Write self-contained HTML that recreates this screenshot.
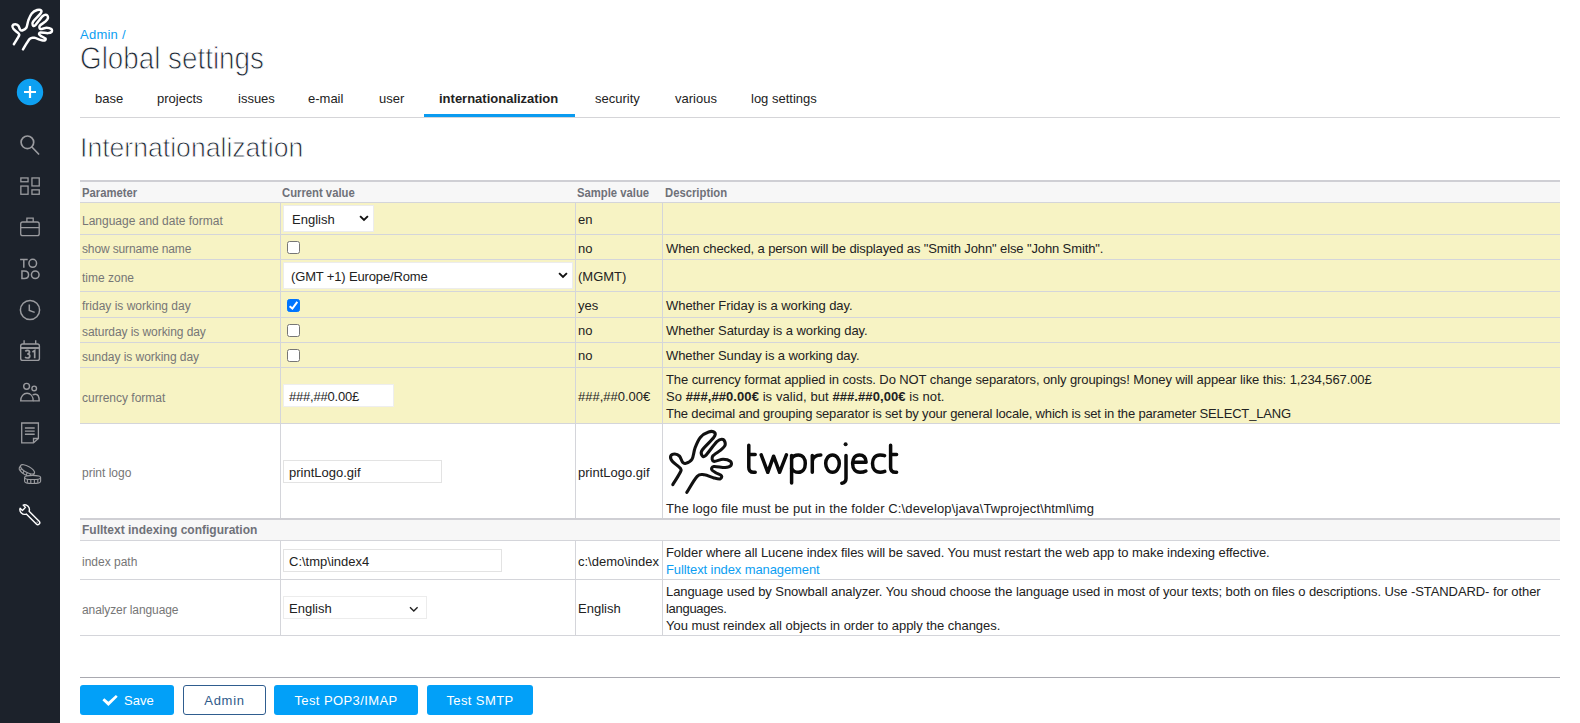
<!DOCTYPE html>
<html><head><meta charset="utf-8">
<style>
*{box-sizing:border-box}
html,body{margin:0;padding:0}
body{width:1580px;height:723px;overflow:hidden;position:relative;background:#fff;font-family:"Liberation Sans",sans-serif;color:#222}
.a{position:absolute;white-space:nowrap;line-height:1}
#side{position:absolute;left:0;top:0;width:60px;height:723px;background:#1c222b}
.ic{position:absolute;left:0;width:60px;overflow:visible}
.tab{position:absolute;top:91px;font-size:13px;color:#222}
.hl{position:absolute;left:80px;width:1480px;height:1px;background:#d4d5da}
.vl{position:absolute;width:1px;background:#d4d5da}
.yel{position:absolute;left:80px;width:1480px;background:#f7f3c4}
.lab{position:absolute;left:82px;font-size:12px;color:#767676;line-height:1;white-space:nowrap}
.th{position:absolute;font-size:12px;font-weight:bold;color:#6f7179;line-height:1;white-space:nowrap;transform-origin:0 0}
.tx{position:absolute;font-size:13px;color:#222;line-height:1;white-space:nowrap}
.sel{position:absolute;background:#fff;border:1px solid #ececec}
.inp{position:absolute;background:#fff;border:1px solid #e3e3e3}
.cb{position:absolute;left:287px;width:13px;height:13px;border:1.3px solid #767676;border-radius:2.5px;background:#fff}
.btn{position:absolute;top:685px;height:30px;border-radius:3px;background:#02a0f8;color:#fff;font-size:13px;line-height:32px;text-align:center;letter-spacing:0.4px}
</style></head><body>

<div id="side">
<svg width="60" height="723" viewBox="0 0 60 723" style="position:absolute;left:0;top:0">
<path transform="translate(8.8,5.5) scale(0.65)" d="M7.80,59.60 C9.00,57.62 13.70,50.37 15.00,47.70 C16.30,45.03 16.88,45.50 15.60,43.60 C14.32,41.70 8.95,38.38 7.30,36.30 C5.65,34.22 5.27,32.32 5.70,31.10 C6.13,29.88 8.43,29.00 9.90,29.00 C11.37,29.00 13.22,29.72 14.50,31.10 C15.78,32.48 16.57,36.08 17.60,37.30 C18.63,38.52 19.13,38.92 20.70,38.40 C22.27,37.88 25.43,36.80 27.00,34.20 C28.57,31.60 28.72,26.43 30.10,22.80 C31.48,19.17 33.05,15.03 35.30,12.40 C37.55,9.77 41.20,7.80 43.60,7.00 C46.00,6.20 48.83,6.70 49.70,7.60 C50.57,8.50 50.87,9.52 48.80,12.40 C46.73,15.28 39.30,21.95 37.30,24.90 C35.30,27.85 36.27,29.15 36.80,30.10 C37.33,31.05 37.98,32.85 40.50,30.60 C43.02,28.35 48.97,19.28 51.90,16.60 C54.83,13.92 56.72,13.98 58.10,14.50 C59.48,15.02 60.55,17.97 60.20,19.70 C59.85,21.43 58.08,23.00 56.00,24.90 C53.92,26.80 48.90,29.20 47.70,31.10 C46.50,33.00 47.07,35.78 48.80,36.30 C50.53,36.82 55.33,34.20 58.10,34.20 C60.87,34.20 64.10,35.25 65.40,36.30 C66.70,37.35 66.77,39.47 65.90,40.50 C65.03,41.53 63.05,42.33 60.20,42.50 C57.35,42.67 51.05,41.15 48.80,41.50 C46.55,41.85 46.37,43.57 46.70,44.60 C47.03,45.63 49.17,46.67 50.80,47.70 C52.43,48.73 55.80,49.77 56.50,50.80 C57.20,51.83 56.28,53.55 55.00,53.90 C53.72,54.25 51.40,53.58 48.80,52.90 C46.20,52.22 42.17,50.07 39.40,49.80 C36.63,49.53 35.13,48.37 32.20,51.30 C29.27,54.23 23.53,64.72 21.80,67.40" fill="none" stroke="#fff" stroke-width="3.85" stroke-linecap="round" stroke-linejoin="round"/>
<circle cx="30" cy="92" r="13.2" fill="#0ea0f1"/>
<path d="M24 92H36M30 86V98" stroke="#fff" stroke-width="2.2" fill="none"/>
<g fill="none" stroke="#9a9b9f" stroke-width="1.7">
<circle cx="27.4" cy="142.3" r="6.3"/>
<path d="M31.9 147 L38.6 154" stroke-linecap="round"/>
</g>
<g fill="none" stroke="#9a9b9f" stroke-width="1.3">
<rect x="20.85" y="177.95" width="7.2" height="3.8"/>
<rect x="20.85" y="186.05" width="7.2" height="8.2"/>
<rect x="31.95" y="177.95" width="7.3" height="8"/>
<rect x="31.95" y="189.85" width="7.3" height="4.4"/>
<rect x="20.7" y="222" width="18.5" height="13.7" rx="2"/>
<path d="M26.9 222V218.2H33.2V222M20.7 227.6H39.2"/>
<circle cx="30" cy="310" r="9.6" stroke-width="1.5"/>
<path d="M29.3 304.5V310.4L34.7 312.4" stroke-width="1.5"/>
<rect x="20.7" y="344" width="18.7" height="16.4" rx="2" stroke-width="1.4"/>
<path d="M20.7 348H39.4" stroke-width="1.9"/><path d="M24.1 340.2V344M35.7 340.2V344" stroke-width="1.4"/>
<circle cx="26.6" cy="386.3" r="2.9" stroke-width="1.4"/>
<circle cx="34.2" cy="388.4" r="2.3" stroke-width="1.4"/>
<path d="M20.7 400.9C20.7 396.2 23.5 393.3 27 393.3C30.5 393.3 33.2 396.2 33.2 400.9Z" stroke-width="1.4"/>
<path d="M32.6 395C33.5 394.4 34.6 394.2 35.6 394.2C37.9 394.2 39.2 397 39.2 400.9H33.4" stroke-width="1.4"/>
<path d="M21.7 423H38.4V438.5L33.5 442.8H21.7Z" stroke-width="1.3"/>
<path d="M38.4 438.5H33.5V442.8" stroke-width="1.3"/>
<path d="M24.9 428H34.7M24.9 431.1H34.7M24.9 434.2H34.7" stroke-width="1.4"/>
<g stroke-width="1.15">
<g transform="translate(27.5 469.4) rotate(29.4)">
<ellipse rx="7.9" ry="3.1"/>
<path d="M-7.9 0V2.7A7.9 3.1 0 0 0 7.9 2.7V0"/>
<path d="M-5.6 2.3V4.8M-2.2 3.1V5.6M1.5 3.1V5.6M5 2.4V4.9"/>
</g>
<g transform="translate(32.6 477.4)">
<path d="M-8 0A8 2.1 0 0 1 8 0A8 2.1 0 0 1 -8 0Z" fill="#1c222b"/>
<path d="M-8 0V3.8A8 2.3 0 0 0 8 3.8V0"/>
<path d="M-5.2 1.6V5.3M-1.8 2V5.9M1.8 2V5.9M5.2 1.6V5.3"/>
</g>
</g>
</g>
<g fill="none" stroke="#9a9b9f" stroke-width="1.5">
<path d="M20.1 259.6H27.7M23.8 259.6V267.8"/>
<ellipse cx="32.75" cy="263.35" rx="3.8" ry="4"/>
<path d="M21.95 270.95V278.55H24.4C27 278.55 28.55 277.1 28.55 274.75C28.55 272.4 27 270.95 24.4 270.95Z"/>
<ellipse cx="35.25" cy="274.75" rx="3.8" ry="3.8"/>
<path d="M25.3 351.3C25.9 350.7 26.7 350.4 27.5 350.4C28.8 350.4 29.5 351.1 29.5 352.1C29.5 353.2 28.6 354 27.2 354C28.8 354 29.8 354.8 29.8 356C29.8 357.3 28.8 358 27.4 358C26.5 358 25.6 357.7 25 357.2" stroke-width="1.7"/>
<path d="M32.4 352L34.7 350.6V358.3" stroke-width="1.7"/>
</g>
<g transform="translate(24.65 509.6) rotate(45)" fill="none" stroke="#fff" stroke-width="1.4" stroke-linejoin="round">
<path d="M-4.24 -2.15L-1 -2.15L-1 2.15L-4.24 2.15A4.75 4.75 0 0 0 4.3 2L18.5 2A2 2 0 0 0 18.5 -2L4.3 -2A4.75 4.75 0 0 0 -4.24 -2.15Z"/>
<circle cx="17.6" cy="0" r="0.55" fill="#fff" stroke="none"/>
</g>
</svg>
</div>

<!-- header -->
<div class="a" style="left:80px;top:28px;font-size:13px;color:#0c9ef2;letter-spacing:0.25px">Admin /</div>
<div class="a" style="left:80px;top:43px;font-size:31px;color:#1f2a36;-webkit-text-stroke:0.9px #fff;transform:scaleX(0.897);transform-origin:0 0">Global settings</div>

<div class="tab" style="left:95px">base</div>
<div class="tab" style="left:157px">projects</div>
<div class="tab" style="left:238px">issues</div>
<div class="tab" style="left:308px">e-mail</div>
<div class="tab" style="left:379px">user</div>
<div class="tab" style="left:439px;font-weight:bold">internationalization</div>
<div class="tab" style="left:595px">security</div>
<div class="tab" style="left:675px">various</div>
<div class="tab" style="left:751px">log settings</div>
<div style="position:absolute;left:80px;top:117px;width:1480px;height:1px;background:#d5d5d8"></div>
<div style="position:absolute;left:424px;top:114px;width:151px;height:3px;background:#0a9bf0"></div>

<div class="a" style="left:80px;top:135px;font-size:27px;color:#1f2a36;-webkit-text-stroke:0.8px #fff;transform:scaleX(0.985);transform-origin:0 0">Internationalization</div>

<!-- table -->
<div style="position:absolute;left:80px;top:180px;width:1480px;height:2px;background:#cfcfd4"></div>
<div style="position:absolute;left:80px;top:182px;width:1480px;height:20px;background:#f7f7f7"></div>
<div class="hl" style="top:202px"></div>
<div class="yel" style="top:203px;height:220px"></div>
<div class="hl" style="top:234px"></div>
<div class="hl" style="top:259px"></div>
<div class="hl" style="top:291px"></div>
<div class="hl" style="top:317px"></div>
<div class="hl" style="top:342px"></div>
<div class="hl" style="top:367px"></div>
<div class="hl" style="top:423px"></div>
<div class="vl" style="left:280px;top:203px;height:315px"></div>
<div class="vl" style="left:575px;top:203px;height:315px"></div>
<div class="vl" style="left:662px;top:203px;height:315px"></div>
<div style="position:absolute;left:80px;top:518px;width:1480px;height:2px;background:#cfcfd4"></div>
<div style="position:absolute;left:80px;top:520px;width:1480px;height:20px;background:#f7f7f7"></div>
<div class="hl" style="top:540px"></div>
<div class="hl" style="top:579px"></div>
<div class="hl" style="top:635px"></div>
<div class="vl" style="left:280px;top:541px;height:94px"></div>
<div class="vl" style="left:575px;top:541px;height:94px"></div>
<div class="vl" style="left:662px;top:541px;height:94px"></div>

<div class="th" style="left:82px;top:187px;transform:scaleX(0.94)">Parameter</div>
<div class="th" style="left:282px;top:187px;transform:scaleX(0.94)">Current value</div>
<div class="th" style="left:577px;top:187px;transform:scaleX(0.94)">Sample value</div>
<div class="th" style="left:665px;top:187px;transform:scaleX(0.94)">Description</div>

<div class="lab" style="top:215px">Language and date format</div>
<div class="lab" style="top:243px;letter-spacing:-0.13px">show surname name</div>
<div class="lab" style="top:272px">time zone</div>
<div class="lab" style="top:300px">friday is working day</div>
<div class="lab" style="top:326px;letter-spacing:-0.07px">saturday is working day</div>
<div class="lab" style="top:351px;letter-spacing:-0.05px">sunday is working day</div>
<div class="lab" style="top:392px">currency format</div>
<div class="lab" style="top:467px">print logo</div>
<div class="th" style="left:82px;top:524px;font-size:12px">Fulltext indexing configuration</div>
<div class="lab" style="top:556px">index path</div>
<div class="lab" style="top:604px;letter-spacing:-0.1px">analyzer language</div>

<!-- current values -->
<div class="sel" style="left:283px;top:205px;width:91px;height:27px"></div>
<div class="tx" style="left:292px;top:213px">English</div>
<svg style="position:absolute;left:358px;top:214px" width="13" height="9"><path d="M2.1 2.1L6 6L9.9 2.1" fill="none" stroke="#111" stroke-width="1.9"/></svg>
<div class="cb" style="top:241px"></div>
<div class="sel" style="left:283px;top:262px;width:290px;height:27px"></div>
<div class="tx" style="left:291px;top:270px;letter-spacing:-0.15px">(GMT +1) Europe/Rome</div>
<svg style="position:absolute;left:557px;top:271px" width="13" height="9"><path d="M2.1 2.1L6 6L9.9 2.1" fill="none" stroke="#111" stroke-width="1.9"/></svg>
<div class="cb" style="top:299px;background:#0075ff;border-color:#0075ff"></div>
<svg style="position:absolute;left:287px;top:299px" width="13" height="13"><path d="M2.6 7.2L5.4 9.5L10.3 2.8" fill="none" stroke="#fff" stroke-width="2"/></svg>
<div class="cb" style="top:324px"></div>
<div class="cb" style="top:349px"></div>
<div class="inp" style="left:283px;top:384px;width:111px;height:23px;border-color:#eee"></div>
<div class="tx" style="left:289px;top:390px;letter-spacing:-0.2px">###,##0.00£</div>
<div class="inp" style="left:283px;top:460px;width:159px;height:23px"></div>
<div class="tx" style="left:289px;top:466px">printLogo.gif</div>
<div class="inp" style="left:283px;top:549px;width:219px;height:23px"></div>
<div class="tx" style="left:289px;top:555px">C:\tmp\index4</div>
<div class="sel" style="left:283px;top:596px;width:144px;height:23px"></div>
<div class="tx" style="left:289px;top:602px">English</div>
<svg style="position:absolute;left:408px;top:605px" width="13" height="9"><path d="M2 2.2L5.8 6L9.6 2.2" fill="none" stroke="#222" stroke-width="1.4"/></svg>

<!-- samples -->
<div class="tx" style="left:578px;top:213px">en</div>
<div class="tx" style="left:578px;top:242px">no</div>
<div class="tx" style="left:578px;top:270px">(MGMT)</div>
<div class="tx" style="left:578px;top:299px">yes</div>
<div class="tx" style="left:578px;top:324px">no</div>
<div class="tx" style="left:578px;top:349px">no</div>
<div class="tx" style="left:578px;top:390px">###,##0.00€</div>
<div class="tx" style="left:578px;top:466px">printLogo.gif</div>
<div class="tx" style="left:578px;top:555px">c:\demo\index</div>
<div class="tx" style="left:578px;top:602px">English</div>

<!-- descriptions -->
<div class="tx" style="left:666px;letter-spacing:-0.12px;top:242px">When checked, a person will be displayed as "Smith John" else "John Smith".</div>
<div class="tx" style="left:666px;letter-spacing:-0.056px;top:299px">Whether Friday is a working day.</div>
<div class="tx" style="left:666px;letter-spacing:-0.08px;top:324px">Whether Saturday is a working day.</div>
<div class="tx" style="left:666px;letter-spacing:-0.09px;top:349px">Whether Sunday is a working day.</div>
<div class="tx" style="left:666px;letter-spacing:-0.09px;top:373px">The currency format applied in costs. Do NOT change separators, only groupings! Money will appear like this: 1,234,567.00£</div>
<div class="tx" style="left:666px;letter-spacing:0.08px;top:390px">So <b>###,##0.00€</b> is valid, but <b>###.##0,00€</b> is not.</div>
<div class="tx" style="left:666px;letter-spacing:-0.17px;top:407px">The decimal and grouping separator is set by your general locale, which is set in the parameter SELECT_LANG</div>
<svg style="position:absolute;left:0;top:0;overflow:visible" width="1" height="1">
<path transform="translate(665 425)" d="M7.80,59.60 C9.00,57.62 13.70,50.37 15.00,47.70 C16.30,45.03 16.88,45.50 15.60,43.60 C14.32,41.70 8.95,38.38 7.30,36.30 C5.65,34.22 5.27,32.32 5.70,31.10 C6.13,29.88 8.43,29.00 9.90,29.00 C11.37,29.00 13.22,29.72 14.50,31.10 C15.78,32.48 16.57,36.08 17.60,37.30 C18.63,38.52 19.13,38.92 20.70,38.40 C22.27,37.88 25.43,36.80 27.00,34.20 C28.57,31.60 28.72,26.43 30.10,22.80 C31.48,19.17 33.05,15.03 35.30,12.40 C37.55,9.77 41.20,7.80 43.60,7.00 C46.00,6.20 48.83,6.70 49.70,7.60 C50.57,8.50 50.87,9.52 48.80,12.40 C46.73,15.28 39.30,21.95 37.30,24.90 C35.30,27.85 36.27,29.15 36.80,30.10 C37.33,31.05 37.98,32.85 40.50,30.60 C43.02,28.35 48.97,19.28 51.90,16.60 C54.83,13.92 56.72,13.98 58.10,14.50 C59.48,15.02 60.55,17.97 60.20,19.70 C59.85,21.43 58.08,23.00 56.00,24.90 C53.92,26.80 48.90,29.20 47.70,31.10 C46.50,33.00 47.07,35.78 48.80,36.30 C50.53,36.82 55.33,34.20 58.10,34.20 C60.87,34.20 64.10,35.25 65.40,36.30 C66.70,37.35 66.77,39.47 65.90,40.50 C65.03,41.53 63.05,42.33 60.20,42.50 C57.35,42.67 51.05,41.15 48.80,41.50 C46.55,41.85 46.37,43.57 46.70,44.60 C47.03,45.63 49.17,46.67 50.80,47.70 C52.43,48.73 55.80,49.77 56.50,50.80 C57.20,51.83 56.28,53.55 55.00,53.90 C53.72,54.25 51.40,53.58 48.80,52.90 C46.20,52.22 42.17,50.07 39.40,49.80 C36.63,49.53 35.13,48.37 32.20,51.30 C29.27,54.23 23.53,64.72 21.80,67.40" fill="none" stroke="#111" stroke-width="3.1" stroke-linecap="round" stroke-linejoin="round"/>
<g transform="translate(740 430)" fill="none" stroke="#0a0a0a" stroke-width="3.5" stroke-linejoin="round" stroke-linecap="round">
<path d="M8.8 15.2V37.5C8.8 41 10.5 42.3 13.5 42.3H15.2M8.8 24.4H15.2"/>
<path d="M21.2 24.9L27.8 42.3L33.6 26.2L39.6 42.3L46.4 24.9"/>
<path d="M51.6 25.5V53"/>
<path d="M51.6 28.5C53 26 55.5 24.9 58.4 24.9C62.6 24.9 65.3 28.5 65.3 33.6C65.3 38.7 62.6 42.3 58.4 42.3C55.5 42.3 53 41 51.6 38.5"/>
<path d="M72.3 25.5V42.3M72.3 31C73 26.5 76 24.9 80.8 24.9"/>
<ellipse cx="92.5" cy="33.6" rx="6.8" ry="8.7"/>
<path d="M106 25.5V48.5C106 51.5 104.5 52.8 101.8 53.3"/>
<circle cx="105.6" cy="14.3" r="2" fill="#111" stroke="none"/>
<path d="M112.6 32.3H126.1C126.1 27.5 123.4 24.9 119.4 24.9C115.1 24.9 112.6 28.7 112.6 33.6C112.6 38.9 115.4 42.3 120 42.3C122.6 42.3 124.8 41.6 125.9 41"/>
<path d="M144.6 25.6C143.6 25.2 141.8 24.9 140 24.9C135.1 24.9 132.5 28.7 132.5 33.6C132.5 38.8 135.2 42.3 140.2 42.3C142.3 42.3 143.6 41.9 144.8 41.4"/>
<path d="M150.6 15.2V37.5C150.6 41 152.3 42.3 155.3 42.3H156.6M150.6 24.4H156.6"/>
</g></svg>
<div class="tx" style="left:666px;letter-spacing:0.12px;top:502px">The logo file must be put in the folder C:\develop\java\Twproject\html\img</div>
<div class="tx" style="left:666px;letter-spacing:-0.07px;top:546px">Folder where all Lucene index files will be saved. You must restart the web app to make indexing effective.</div>
<div class="tx" style="left:666px;letter-spacing:-0.1px;top:563px;color:#0c9ef2">Fulltext index management</div>
<div class="tx" style="left:666px;letter-spacing:-0.075px;top:585px">Language used by Snowball analyzer. You shoud choose the language used in most of your texts; both on files o descriptions. Use -STANDARD- for other</div>
<div class="tx" style="left:666px;letter-spacing:-0.3px;top:602px">languages.</div>
<div class="tx" style="left:666px;letter-spacing:-0.034px;top:619px">You must reindex all objects in order to apply the changes.</div>

<!-- footer -->
<div style="position:absolute;left:80px;top:677px;width:1480px;height:1px;background:#a9a9b0"></div>
<div class="btn" style="left:80px;width:94px"></div>
<svg style="position:absolute;left:0;top:0" width="160" height="723"><polygon points="102.4,700.3 104.3,698.2 108.4,701.8 115.9,694.9 117.7,696.8 108.4,706" fill="#fff"/></svg>
<div class="a" style="left:124px;top:694px;font-size:13px;color:#fff;letter-spacing:0px">Save</div>
<div class="btn" style="left:183px;width:83px;background:#fff;border:1px solid #2f5d8f;color:#2f5a8a;line-height:30px;letter-spacing:0.7px">Admin</div>
<div class="btn" style="left:274px;width:144px">Test POP3/IMAP</div>
<div class="btn" style="left:427px;width:106px">Test SMTP</div>

</body></html>
